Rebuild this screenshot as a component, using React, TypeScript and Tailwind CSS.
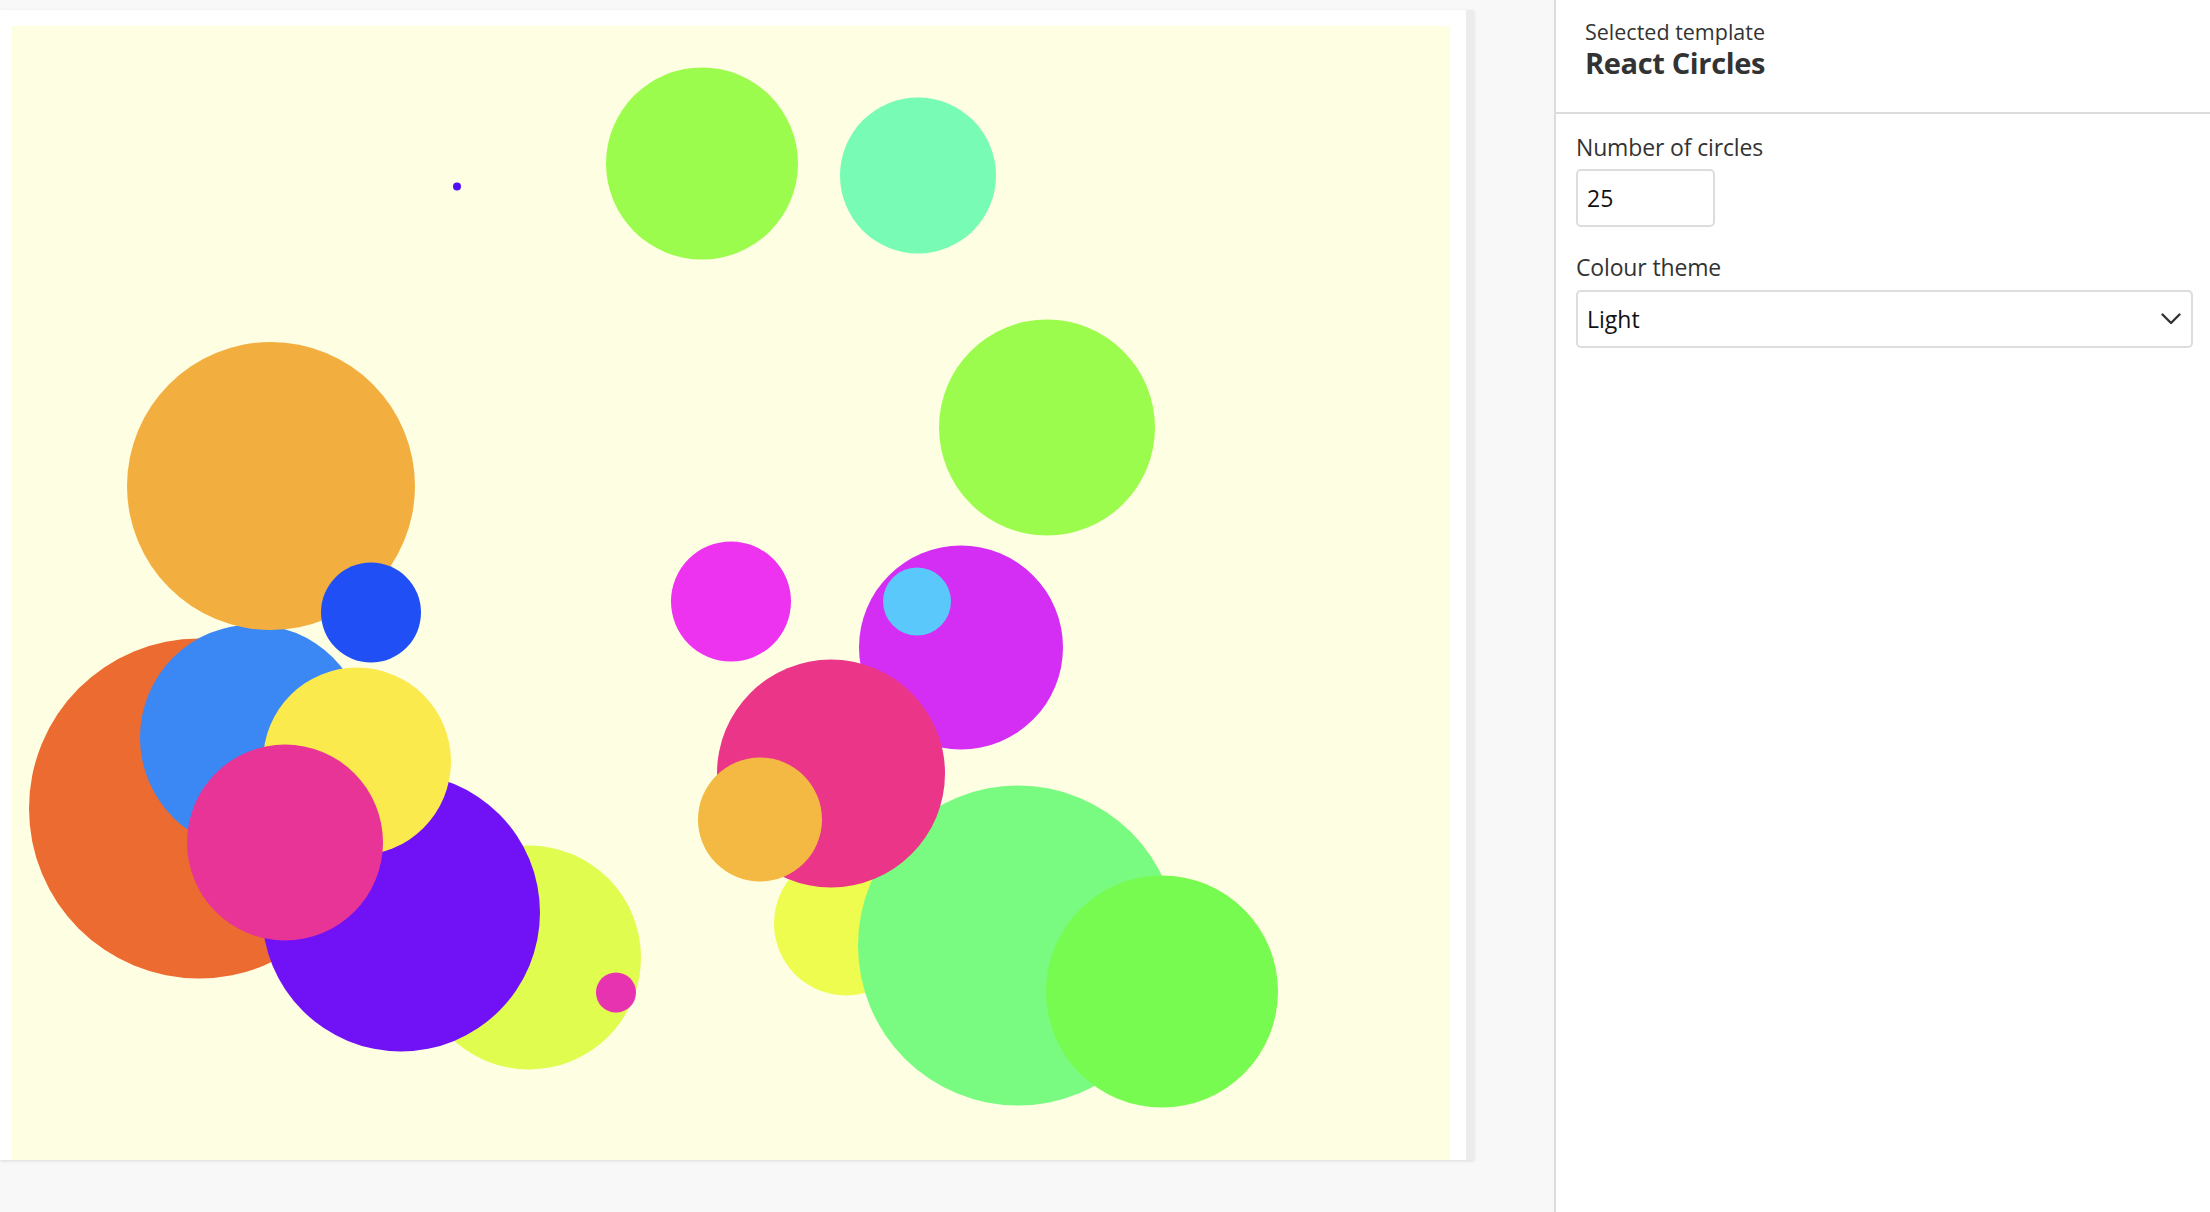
import React from "react";

type C = { cx: number; cy: number; r: number; fill: string };

const circles: C[] = [
  // top
  { cx: 457, cy: 186.5, r: 4, fill: "#4f0ff5" },
  { cx: 702, cy: 163.5, r: 96, fill: "#9cfc4d" },
  { cx: 918, cy: 175.5, r: 78, fill: "#78fbb5" },
  { cx: 1047, cy: 427.5, r: 108, fill: "#9cfc4d" },
  // left cluster
  { cx: 199, cy: 808.5, r: 170, fill: "#ec6b30" },
  { cx: 529, cy: 957.5, r: 112, fill: "#e0fc4f" },
  { cx: 401, cy: 912.5, r: 139, fill: "#7012f5" },
  { cx: 253, cy: 737.5, r: 113, fill: "#3b88f5" },
  { cx: 271, cy: 486, r: 144, fill: "#f3ae40" },
  { cx: 371, cy: 612.5, r: 50, fill: "#1f4ff5" },
  { cx: 357, cy: 761.5, r: 94, fill: "#fbea4e" },
  { cx: 285, cy: 842.5, r: 98, fill: "#e83397" },
  { cx: 616, cy: 992.5, r: 20, fill: "#e833b0" },
  // right cluster
  { cx: 731, cy: 601.5, r: 60, fill: "#ed33f0" },
  { cx: 961, cy: 647.5, r: 102, fill: "#d42ef5" },
  { cx: 917, cy: 601.5, r: 34, fill: "#5ac8fa" },
  { cx: 846, cy: 923.5, r: 72, fill: "#eefc50" },
  { cx: 1018, cy: 945.5, r: 160, fill: "#78fb80" },
  { cx: 1162, cy: 991.5, r: 116, fill: "#78fb50" },
  { cx: 831, cy: 773.5, r: 114, fill: "#ea3589" },
  { cx: 760, cy: 819.5, r: 62, fill: "#f3b942" },
];

export default function App() {
  return (
    <div className="w-[2210px] h-[1212px] bg-[#f8f8f8] flex overflow-hidden font-['Open_Sans',sans-serif]">
      {/* preview area */}
      <div className="w-[1554px] pt-[10px]">
        <div className="flex w-[1474px] h-[1150px] shadow-[0_1px_3px_rgba(0,0,0,0.12)]">
          <div className="w-[1466px] h-full bg-white pl-[12px] pt-[16px]">
            <svg
              width={1438}
              height={1134}
              viewBox="12 26 1438 1134"
              className="block bg-[#fefee2]"
            >
              {circles.map((c, i) => (
                <circle key={i} cx={c.cx} cy={c.cy} r={c.r} fill={c.fill} />
              ))}
            </svg>
          </div>
          <div className="w-[8px] h-full bg-[#ececec]" />
        </div>
      </div>

      {/* side panel */}
      <div className="w-[656px] h-full bg-white border-l-2 border-[#dcdcdc] flex flex-col">
        <div className="h-[114px] border-b-2 border-[#dcdcdc] pl-[29px] pt-[19px]">
          <div className="text-[21.5px] leading-[26px] text-[#333]">Selected template</div>
          <div className="mt-[1px] text-[29px] leading-[34px] font-bold text-[#333] tracking-[-0.35px]">React Circles</div>
        </div>
        <div className="pl-[20px] pr-[17px] pt-[19px] flex flex-col">
          <div className="text-[23px] leading-[28px] text-[#333] tracking-[-0.15px]">Number of circles</div>
          <div className="mt-[8px] w-[139px] h-[58px] border-2 border-[#dddddd] rounded-[5px] flex items-center pl-[9px] text-[23px] text-[#111]">
            25
          </div>
          <div className="mt-[26px] text-[23px] leading-[28px] text-[#333] tracking-[-0.15px]">Colour theme</div>
          <div className="mt-[9px] h-[58px] border-2 border-[#dddddd] rounded-[5px] flex items-center justify-between pl-[9px] pr-[10px] text-[23px] text-[#111]">
            <span>Light</span>
            <svg width="20" height="12" viewBox="0 0 20 12" fill="none">
              <path d="M1.5 1.5 L10 10 L18.5 1.5" stroke="#333" strokeWidth="2.4" strokeLinecap="round" strokeLinejoin="round" />
            </svg>
          </div>
        </div>
      </div>
    </div>
  );
}
